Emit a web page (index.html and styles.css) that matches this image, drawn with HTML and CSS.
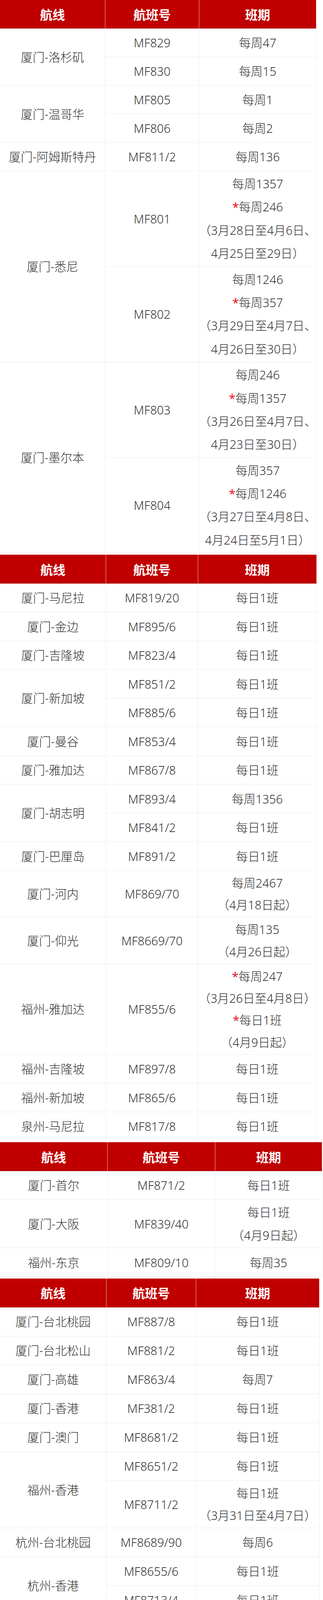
FILE: index.html
```html
<!DOCTYPE html>
<html lang="zh-CN">
<head>
<meta charset="utf-8">
<title>航班计划</title>
<link rel="stylesheet" href="styles.css">
</head>
<body>

<div class="sched t1">
  <div class="cell head">航线</div><div class="cell head">航班号</div><div class="cell head">班期</div>

  <div class="cell span2">厦门-洛杉矶</div>
  <div class="cell">MF829</div><div class="cell">每周47</div>
  <div class="cell">MF830</div><div class="cell">每周15</div>

  <div class="cell span2">厦门-温哥华</div>
  <div class="cell">MF805</div><div class="cell">每周1</div>
  <div class="cell">MF806</div><div class="cell">每周2</div>

  <div class="cell">厦门-阿姆斯特丹</div><div class="cell">MF811/2</div><div class="cell">每周136</div>

  <div class="cell span2">厦门-悉尼</div>
  <div class="cell">MF801</div>
  <div class="cell"><div class="lines"><span class="ln">每周1357</span><span class="ln"><b class="star">*</b>每周246</span><span class="ln">（3月28日至4月6日、</span><span class="ln">4月25日至29日）</span></div></div>
  <div class="cell">MF802</div>
  <div class="cell"><div class="lines"><span class="ln">每周1246</span><span class="ln"><b class="star">*</b>每周357</span><span class="ln">（3月29日至4月7日、</span><span class="ln">4月26日至30日）</span></div></div>

  <div class="cell span2">厦门-墨尔本</div>
  <div class="cell">MF803</div>
  <div class="cell"><div class="lines"><span class="ln">每周246</span><span class="ln"><b class="star">*</b>每周1357</span><span class="ln">（3月26日至4月7日、</span><span class="ln">4月23日至30日）</span></div></div>
  <div class="cell">MF804</div>
  <div class="cell"><div class="lines"><span class="ln">每周357</span><span class="ln"><b class="star">*</b>每周1246</span><span class="ln">（3月27日至4月8日、</span><span class="ln">4月24日至5月1日）</span></div></div>
</div>

<div class="sched t2">
  <div class="cell head">航线</div><div class="cell head">航班号</div><div class="cell head">班期</div>

  <div class="cell">厦门-马尼拉</div><div class="cell">MF819/20</div><div class="cell">每日1班</div>
  <div class="cell">厦门-金边</div><div class="cell">MF895/6</div><div class="cell">每日1班</div>
  <div class="cell">厦门-吉隆坡</div><div class="cell">MF823/4</div><div class="cell">每日1班</div>

  <div class="cell span2">厦门-新加坡</div>
  <div class="cell">MF851/2</div><div class="cell">每日1班</div>
  <div class="cell">MF885/6</div><div class="cell">每日1班</div>

  <div class="cell">厦门-曼谷</div><div class="cell">MF853/4</div><div class="cell">每日1班</div>
  <div class="cell">厦门-雅加达</div><div class="cell">MF867/8</div><div class="cell">每日1班</div>

  <div class="cell span2">厦门-胡志明</div>
  <div class="cell">MF893/4</div><div class="cell">每周1356</div>
  <div class="cell">MF841/2</div><div class="cell">每日1班</div>

  <div class="cell">厦门-巴厘岛</div><div class="cell">MF891/2</div><div class="cell">每日1班</div>
  <div class="cell">厦门-河内</div><div class="cell">MF869/70</div>
  <div class="cell"><div class="lines"><span class="ln">每周2467</span><span class="ln">（4月18日起）</span></div></div>
  <div class="cell">厦门-仰光</div><div class="cell">MF8669/70</div>
  <div class="cell"><div class="lines"><span class="ln">每周135</span><span class="ln">（4月26日起）</span></div></div>
  <div class="cell">福州-雅加达</div><div class="cell">MF855/6</div>
  <div class="cell"><div class="lines"><span class="ln"><b class="star">*</b>每周247</span><span class="ln">（3月26日至4月8日）</span><span class="ln"><b class="star">*</b>每日1班</span><span class="ln">（4月9日起）</span></div></div>
  <div class="cell">福州-吉隆坡</div><div class="cell">MF897/8</div><div class="cell">每日1班</div>
  <div class="cell">福州-新加坡</div><div class="cell">MF865/6</div><div class="cell">每日1班</div>
  <div class="cell">泉州-马尼拉</div><div class="cell">MF817/8</div><div class="cell">每日1班</div>
</div>

<div class="sched t3">
  <div class="cell head">航线</div><div class="cell head">航班号</div><div class="cell head">班期</div>

  <div class="cell">厦门-首尔</div><div class="cell">MF871/2</div><div class="cell">每日1班</div>
  <div class="cell">厦门-大阪</div><div class="cell">MF839/40</div>
  <div class="cell"><div class="lines"><span class="ln">每日1班</span><span class="ln">（4月9日起）</span></div></div>
  <div class="cell">福州-东京</div><div class="cell">MF809/10</div><div class="cell">每周35</div>
</div>

<div class="sched t4">
  <div class="cell head">航线</div><div class="cell head">航班号</div><div class="cell head">班期</div>

  <div class="cell">厦门-台北桃园</div><div class="cell">MF887/8</div><div class="cell">每日1班</div>
  <div class="cell">厦门-台北松山</div><div class="cell">MF881/2</div><div class="cell">每日1班</div>
  <div class="cell">厦门-高雄</div><div class="cell">MF863/4</div><div class="cell">每周7</div>
  <div class="cell">厦门-香港</div><div class="cell">MF381/2</div><div class="cell">每日1班</div>
  <div class="cell">厦门-澳门</div><div class="cell">MF8681/2</div><div class="cell">每日1班</div>

  <div class="cell span2">福州-香港</div>
  <div class="cell">MF8651/2</div><div class="cell">每日1班</div>
  <div class="cell">MF8711/2</div>
  <div class="cell"><div class="lines"><span class="ln">每日1班</span><span class="ln">（3月31日至4月7日）</span></div></div>

  <div class="cell">杭州-台北桃园</div><div class="cell">MF8689/90</div><div class="cell">每周6</div>

  <div class="cell span2">杭州-香港</div>
  <div class="cell">MF8655/6</div><div class="cell">每日1班</div>
  <div class="cell">MF8713/4</div><div class="cell">每日1班</div>

  <div class="cell">杭州-澳门</div><div class="cell">MF8719/20</div><div class="cell">每日1班</div>

  <div class="cell span2">泉州-香港</div>
  <div class="cell">MF8685/6</div><div class="cell">每日1班</div>
  <div class="cell">MF8683/4</div>
  <div class="cell"><div class="lines"><span class="ln">每日1班</span><span class="ln">（3月31日至4月7日）</span></div></div>

  <div class="cell">泉州-澳门</div><div class="cell">MF8659/60</div><div class="cell">每日1班</div>
</div>

</body>
</html>
```

FILE: styles.css
```css
html, body {
  margin: 0;
  padding: 0;
  background: #ffffff;
}

body {
  font-family: "Noto Sans", "Noto Sans CJK SC", sans-serif;
  color: #333333;
}

.sched {
  display: grid;
  grid-auto-rows: minmax(var(--row), auto);
  margin-bottom: 4px;
  --row: 73.5px;
  --lh: 57px;
}

.sched:last-child {
  margin-bottom: 0;
}

.t1 {
  grid-template-columns: 270px 241px 300px;
  --row: 73px;
  --lh: 59.4px;
}

.t2 {
  grid-template-columns: 272px 236px 304px;
  --row: 73.5px;
  --lh: 56.25px;
}

.t3 {
  grid-template-columns: 276px 276px 274px;
  --row: 73.5px;
  --lh: 58.5px;
}

.t4 {
  grid-template-columns: 273px 230px 316px;
  --row: 74px;
  --lh: 57px;
}

.cell {
  box-sizing: border-box;
  display: flex;
  align-items: center;
  justify-content: center;
  text-align: center;
  white-space: nowrap;
  padding: 3px 0;
  border-right: 1px solid #ececec;
  border-bottom: 1px solid #ececec;
  font-size: 30.5px;
  font-weight: 300;
  line-height: 40px;
  color: #333333;
}

.lines {
  display: flex;
  flex-direction: column;
  align-items: center;
}

.ln {
  display: block;
  height: var(--lh);
  line-height: var(--lh);
}

.span2 {
  grid-row: span 2;
}

.head {
  background: #c00000;
  color: #ffffff;
  font-family: "Noto Sans CJK SC", sans-serif;
  font-weight: 700;
  font-size: 32px;
  line-height: 40px;
  border-right: 1px solid #e6b3b3;
  border-bottom: 1px solid #a80000;
}

.star {
  color: #e8141c;
  font-weight: 400;
}
```
